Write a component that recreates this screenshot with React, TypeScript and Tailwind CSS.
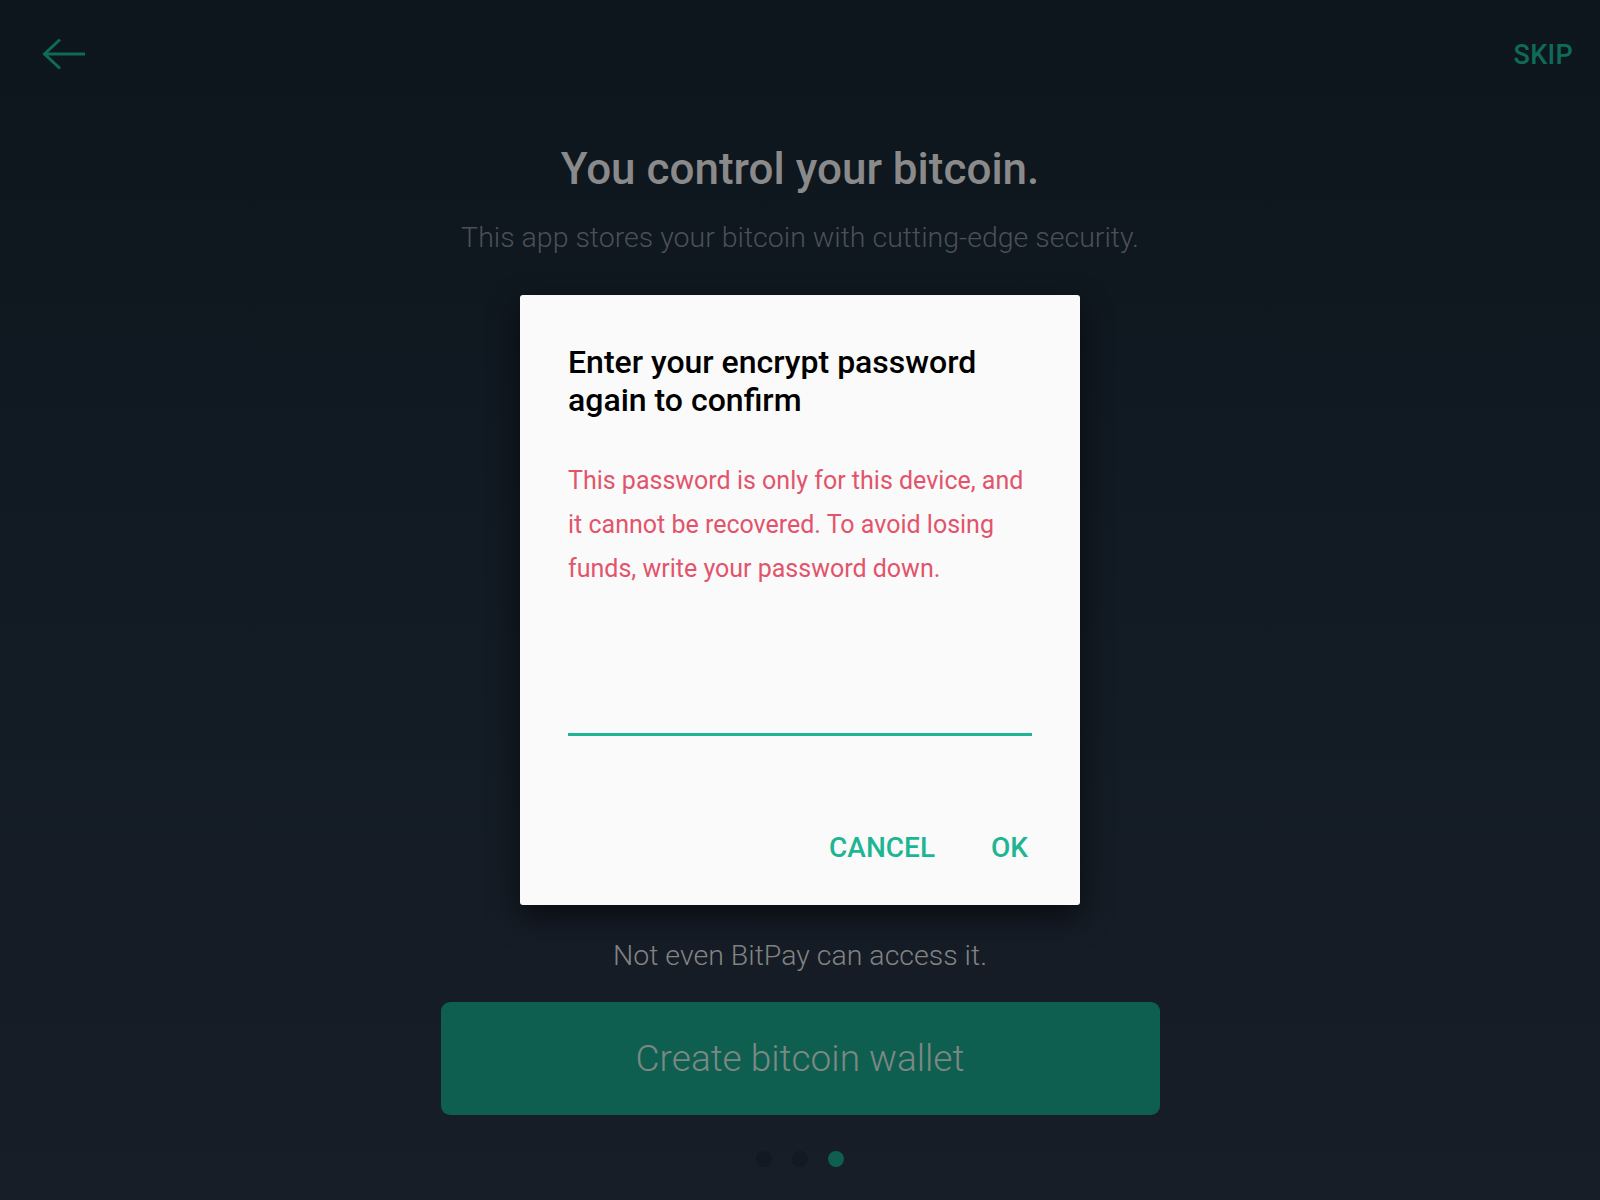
export default function App() {
  return (
    <div
      className="relative w-[1600px] h-[1200px] overflow-hidden bg-gradient-to-b from-[#0d151d] via-[#121a23] to-[#171e28]"
      style={{ fontFamily: 'Roboto, "Noto Sans", sans-serif' }}
    >
      {/* Header */}
      <div className="flex items-center justify-between h-[110px] pl-[42px] pr-[27px]">
        <svg width="44" height="34" viewBox="0 0 44 34" fill="none" className="text-[#0f6b58]">
          <path d="M43 16H2.5M18 1.5L2.5 16L18 30.5" stroke="currentColor" strokeWidth="3" />
        </svg>
        <span className="text-[27px] font-medium text-[#0f6b58] tracking-[0.3px]">SKIP</span>
      </div>

      {/* Onboarding content */}
      <div className="flex flex-col items-center">
        <h1 className="mt-[31px] text-[44px] leading-[56px] font-medium text-[#8a8a8a]">You control your bitcoin.</h1>
        <p className="mt-[24px] text-[28.5px] leading-[34px] font-light text-[#4b5058]">
          This app stores your bitcoin with cutting-edge security.
        </p>
        <div className="h-[684px]" />
        <p className="text-[28.5px] leading-[34px] font-light text-[#838383]">Not even BitPay can access it.</p>
        <button className="mt-[29px] w-[719px] h-[113px] rounded-[9px] bg-[#0e5f50] text-[37px] font-light text-[#7d8884]">
          Create bitcoin wallet
        </button>
        <div className="mt-[36px] flex items-center gap-[20px]">
          <span className="w-4 h-4 rounded-full bg-[#111923]" />
          <span className="w-4 h-4 rounded-full bg-[#111923]" />
          <span className="w-4 h-4 rounded-full bg-[#0e5f50]" />
        </div>
      </div>

      {/* Modal */}
      <div className="absolute inset-0 flex items-center justify-center">
        <div className="w-[560px] h-[610px] rounded-[3px] bg-[#fafafa] shadow-[0_12px_30px_rgba(0,0,0,0.55)] flex flex-col px-[48px] pt-[48px]">
          <h2 className="text-[32px] leading-[38px] font-medium text-black">
            Enter your encrypt password again to confirm
          </h2>
          <p className="mt-[40px] text-[25px] leading-[44px] text-[#e2546b]">
            This password is only for this device, and it cannot be recovered. To avoid losing funds, write your
            password down.
          </p>
          <div className="mt-[142px] h-[3px] bg-[#1db594]" />
          <div className="mt-auto mb-[36px] flex justify-end items-center gap-[56px] pr-[4px]">
            <span className="text-[28px] font-medium text-[#1db594]">CANCEL</span>
            <span className="text-[28px] font-medium text-[#1db594]">OK</span>
          </div>
        </div>
      </div>
    </div>
  );
}
